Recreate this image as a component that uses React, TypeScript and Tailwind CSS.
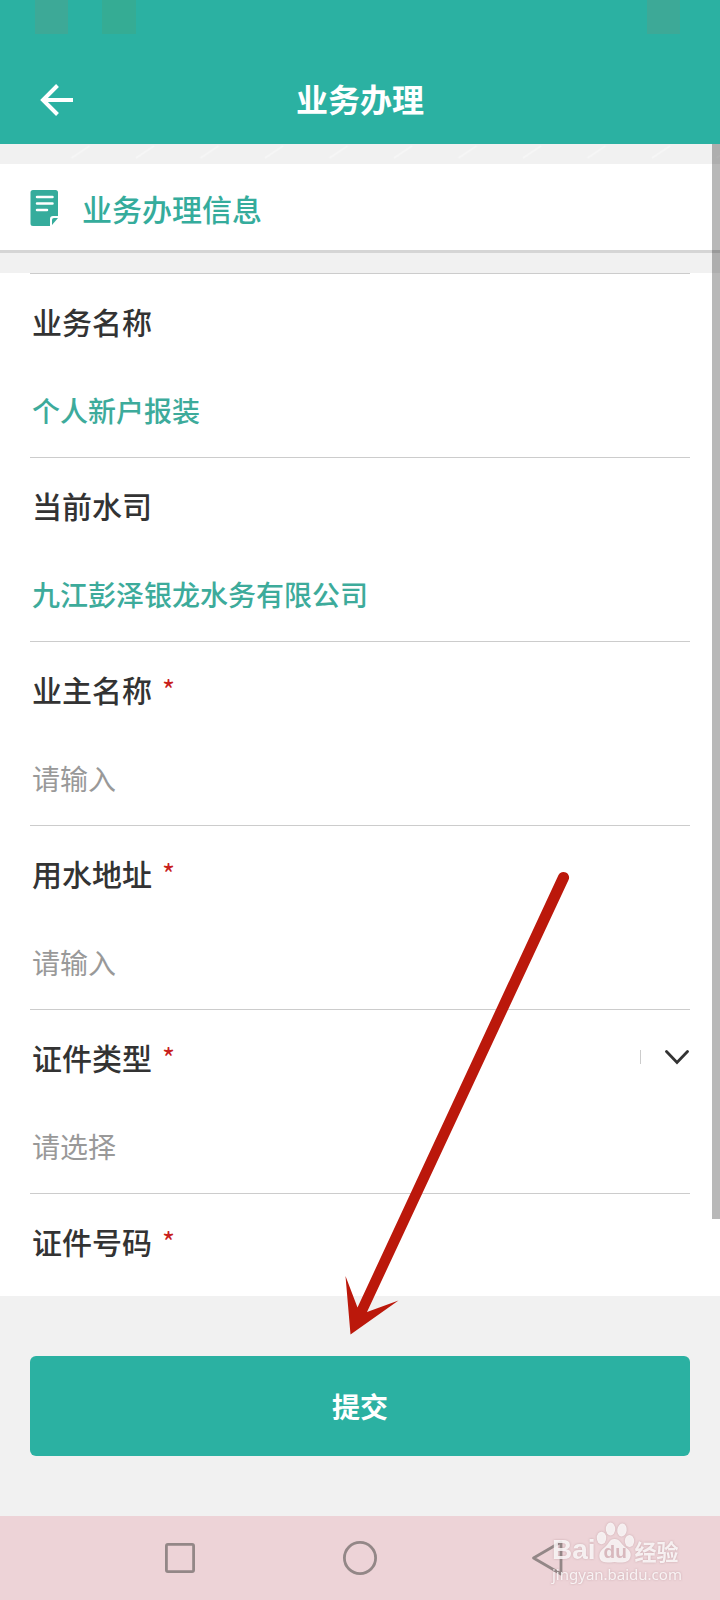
import { useId } from "react";

type Field = {
  label: string;
  kind: "static" | "input" | "select";
  value?: string;
  placeholder?: string;
};

const fields: Field[] = [
  { label: "业务名称", kind: "static", value: "个人新户报装" },
  { label: "当前水司", kind: "static", value: "九江彭泽银龙水务有限公司" },
  { label: "业主名称", kind: "input", placeholder: "请输入" },
  { label: "用水地址", kind: "input", placeholder: "请输入" },
  { label: "证件类型", kind: "select", placeholder: "请选择" },
  { label: "证件号码", kind: "input" },
];

function StatusBar() {
  return (
    <div className="flex h-[34px] justify-between pr-10 pl-[35px]">
      <div className="flex gap-[34px]">
        <span className="w-[33px] bg-[#3da997]" />
        <span className="w-[34px] bg-[#35ac94]" />
      </div>
      <span className="w-[33px] bg-[#3da997]" />
    </div>
  );
}

function Header() {
  return (
    <header className="h-36 shrink-0 bg-[#2bb1a2] text-white">
      <StatusBar />
      <div className="grid h-[110px] grid-cols-[1fr_auto_1fr] items-center pt-[22px]">
        <button type="button" aria-label="返回" className="ml-9 flex size-10 items-center justify-center">
          <svg width="40" height="40" viewBox="0 0 40 40" fill="none" stroke="currentColor" strokeWidth="4">
            <path d="M37 20H6.500M21.500 5.500L7 20L21.500 34.500" />
          </svg>
        </button>
        <h1 className="pb-1 text-[32px] leading-10 font-bold">业务办理</h1>
      </div>
    </header>
  );
}

function SectionTitle() {
  return (
    <div className="flex h-[89px] shrink-0 items-center gap-6 border-b-3 border-[#d5d5d5] bg-white pt-0.5 pl-[30px] text-[#35ac9c]">
      <svg width="28" height="36" viewBox="0 0 28 36">
        <path fill="currentColor" d="M3 0H25.500Q28 0 28 2.500V26H23Q20 26 20 29V36H3Q0.500 36 0.500 33.500V2.500Q0.500 0 3 0Z" />
        <path fill="currentColor" d="M22 30Q22 28 24 28H28L22 35Z" />
        <path stroke="#fff" strokeWidth="2.500" strokeLinecap="round" d="M7 7H22.500M7 13.500H22.500M7 20H17" />
      </svg>
      <h2 className="text-[30px] leading-11 font-medium">业务办理信息</h2>
    </div>
  );
}

function FieldRow({ field }: { field: Field }) {
  const id = useId();
  const required = field.kind !== "static";
  return (
    <div className="flex flex-col gap-[45px] border-t border-[#cccccc] pt-[25px] pb-[25px] pl-[2px]">
      <div className="flex h-11 items-center">
        <label htmlFor={id} className="text-[30px] leading-11 font-medium text-[#333333]">
          {field.label}
        </label>
        {required && <span className="ml-2.5 text-[28px] leading-11 text-[#c8201c]">*</span>}
        {field.kind === "select" && (
          <span className="ml-auto flex items-center gap-6">
            <span className="h-3.5 w-px bg-[#cccccc]" />
            <svg width="25" height="16" viewBox="0 0 25 16" fill="none" stroke="#333" strokeWidth="2.800" strokeLinecap="round">
              <path d="M1.500 2.500L12 13.500L22.500 2.500" />
            </svg>
          </span>
        )}
      </div>
      {field.kind === "static" && (
        <output id={id} className="h-11 text-[28px] leading-11 font-medium text-[#3dab9b]">
          {field.value}
        </output>
      )}
      {field.kind === "input" && (
        <input
          id={id}
          type="text"
          placeholder={field.placeholder}
          className="h-11 w-full text-[28px] leading-11 text-[#333333] outline-none placeholder:text-[#999999]"
        />
      )}
      {field.kind === "select" && (
        <select id={id} className="h-11 w-full appearance-none bg-transparent text-[28px] leading-11 text-[#999999] outline-none">
          <option>{field.placeholder}</option>
        </select>
      )}
    </div>
  );
}

function Stripes() {
  return (
    <svg className="block h-5 w-full shrink-0" aria-hidden="true">
      <defs>
        <pattern id="stripes" x="5" width="64.500" height="20" patternUnits="userSpaceOnUse">
          <path d="M2 14L20 2" stroke="#f6f6f6" strokeWidth="2" />
        </pattern>
      </defs>
      <rect x="64" width="100%" height="20" fill="url(#stripes)" />
    </svg>
  );
}

function NavBar() {
  return (
    <nav className="flex h-21 shrink-0 items-center justify-around bg-[#edd3d7] px-[90px] text-[#938787]">
      <button type="button" aria-label="最近任务" className="flex h-10 w-15 items-center justify-center">
        <svg width="32" height="32" viewBox="0 0 32 32" fill="none" stroke="currentColor" strokeWidth="2.800">
          <rect x="2.400" y="2.400" width="27.200" height="27.200" rx="1.500" />
        </svg>
      </button>
      <button type="button" aria-label="主页" className="flex h-10 w-15 items-center justify-center">
        <svg width="36" height="36" viewBox="0 0 36 36" fill="none" stroke="currentColor" strokeWidth="2.800">
          <circle cx="18" cy="18" r="15.600" />
        </svg>
      </button>
      <button type="button" aria-label="后退" className="flex h-10 w-15 items-center justify-center">
        <svg width="60" height="40" viewBox="0 0 60 40" fill="none" stroke="currentColor" strokeWidth="2.800" strokeLinejoin="round">
          <path d="M23.500 20L51 4V36Z" />
        </svg>
      </button>
    </nav>
  );
}

function Watermark() {
  return (
    <div className="pointer-events-none absolute right-9 bottom-4 w-[132px] text-white/80 drop-shadow-[0_0_1px_rgba(150,110,115,0.5)]">
      <div className="flex h-[42px] items-end">
        <span className="font-['Liberation_Sans'] text-[28px] leading-7 font-bold">Bai</span>
        <span className="relative h-[42px] w-[39px] shrink-0">
          <svg width="39" height="42" viewBox="0 0 39 42" fill="currentColor">
            <ellipse cx="5.500" cy="16" rx="4.700" ry="6.200" />
            <ellipse cx="14.500" cy="7" rx="4.700" ry="6.500" />
            <ellipse cx="26" cy="8" rx="4.700" ry="6.500" transform="rotate(8 26 8)" />
            <ellipse cx="33.500" cy="19" rx="4.700" ry="6" />
            <path d="M18.500 17C24 17 25 22 29 25C34 28 36 32 34 36C32 41 26 41 18.500 40C11 41 6 41 4 37C2 32 5 28 9 25C13 22 13 17 18.500 17Z" />
          </svg>
          <span className="absolute bottom-0.5 left-2 font-['Liberation_Sans'] text-[19px] leading-5 font-bold text-[#d8b8bd]">du</span>
        </span>
        <span className="text-[22px] leading-7 font-bold whitespace-nowrap">经验</span>
      </div>
      <div className="font-['Noto_Sans'] text-[15px] leading-5">jingyan.baidu.com</div>
    </div>
  );
}

function Arrow() {
  return (
    <svg className="pointer-events-none absolute top-[868px] left-[340px]" width="240" height="470" viewBox="340 868 240 470" fill="#bb180b" aria-hidden="true">
      <path d="M558.500 875A5.500 5.500 0 0 1 568.500 880L367 1312L398.500 1300.500L350.500 1334.500L345.500 1276L357.500 1307.500Z" />
    </svg>
  );
}

export default function App() {
  return (
    <div className="relative flex h-screen flex-col overflow-hidden bg-[#f1f1f1] font-['Noto_Sans_CJK_SC',sans-serif]">
      <Header />
      <div className="relative min-h-0 flex-1">
        <main className="flex h-full flex-col overflow-hidden">
          <Stripes />
          <SectionTitle />
          <form className="mt-5 shrink-0 bg-white px-[30px]">
            {fields.map((field) => (
              <FieldRow key={field.label} field={field} />
            ))}
          </form>
        </main>
        <div className="absolute top-0 right-0 h-14/15 w-2 bg-black/28" />
      </div>
      <footer className="shrink-0 px-[30px] py-15">
        <button type="submit" className="h-25 w-full rounded-md bg-[#2bb1a2] text-[28px] leading-10 font-bold text-white">
          提交
        </button>
      </footer>
      <NavBar />
      <Arrow />
      <Watermark />
    </div>
  );
}
